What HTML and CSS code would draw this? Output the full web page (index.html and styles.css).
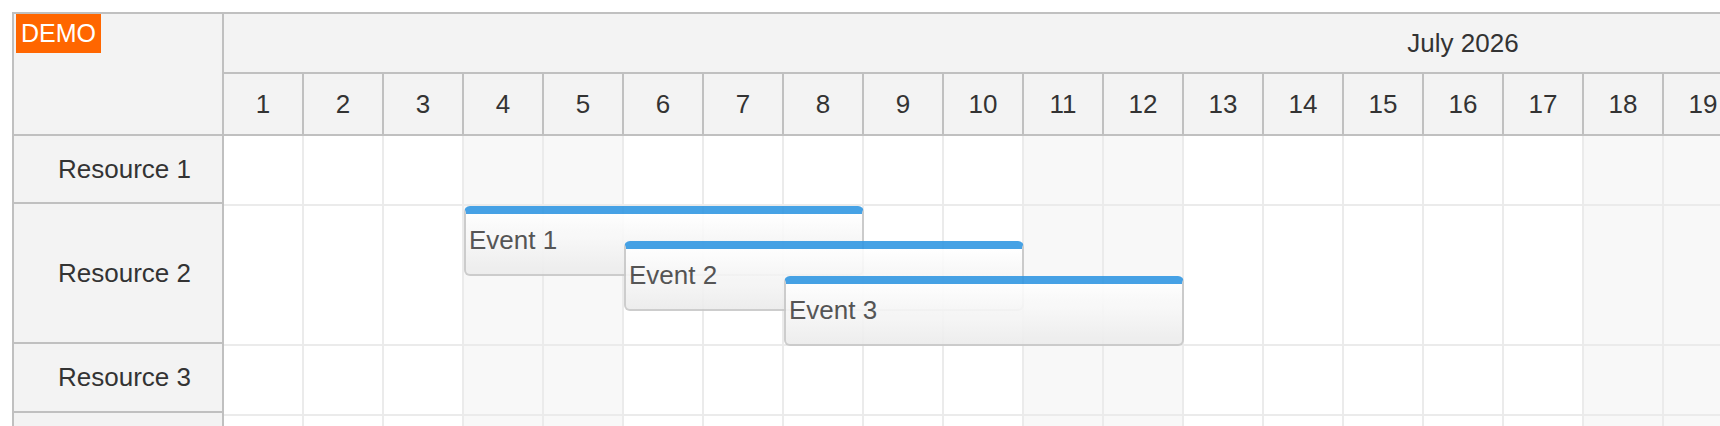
FILE: index.html
```html
<!DOCTYPE html>
<html lang="en">
<head>
  <meta charset="UTF-8">
  <meta name="viewport" content="width=device-width, initial-scale=1.0">
  <link rel="stylesheet" href="styles.css">
  <title>Scheduler</title>
</head>
<body class="page">
  <div class="scheduler">
    <div class="scheduler__corner">
      <span class="demo">DEMO</span>
    </div>

    <div class="timeline">
      <div class="timeline__month">July 2026</div>
      <div class="timeline__days">
        <div class="timeline__day">1</div>
        <div class="timeline__day">2</div>
        <div class="timeline__day">3</div>
        <div class="timeline__day">4</div>
        <div class="timeline__day">5</div>
        <div class="timeline__day">6</div>
        <div class="timeline__day">7</div>
        <div class="timeline__day">8</div>
        <div class="timeline__day">9</div>
        <div class="timeline__day">10</div>
        <div class="timeline__day">11</div>
        <div class="timeline__day">12</div>
        <div class="timeline__day">13</div>
        <div class="timeline__day">14</div>
        <div class="timeline__day">15</div>
        <div class="timeline__day">16</div>
        <div class="timeline__day">17</div>
        <div class="timeline__day">18</div>
        <div class="timeline__day">19</div>
        <div class="timeline__day">20</div>
        <div class="timeline__day">21</div>
        <div class="timeline__day">22</div>
        <div class="timeline__day">23</div>
        <div class="timeline__day">24</div>
        <div class="timeline__day">25</div>
        <div class="timeline__day">26</div>
        <div class="timeline__day">27</div>
        <div class="timeline__day">28</div>
        <div class="timeline__day">29</div>
        <div class="timeline__day">30</div>
        <div class="timeline__day">31</div>
      </div>
    </div>

    <div class="resources">
      <div class="resource resource_first">Resource 1</div>
      <div class="resource resource_tall">Resource 2</div>
      <div class="resource resource_third">Resource 3</div>
      <div class="resource">Resource 4</div>
    </div>

    <div class="lanes">
      <div class="lane">
        <div class="lane__cells"></div>
        <div class="lane__events"></div>
      </div>

      <div class="lane">
        <div class="lane__cells"></div>
        <div class="lane__events">
          <div class="event" style="grid-column: 4 / span 5; grid-row: 1 / span 2;">Event 1</div>
          <div class="event" style="grid-column: 6 / span 5; grid-row: 2 / span 2;">Event 2</div>
          <div class="event" style="grid-column: 8 / span 5; grid-row: 3 / span 2;">Event 3</div>
        </div>
      </div>

      <div class="lane">
        <div class="lane__cells"></div>
        <div class="lane__events"></div>
      </div>

      <div class="lane">
        <div class="lane__cells"></div>
        <div class="lane__events"></div>
      </div>
    </div>
  </div>
</body>
</html>
```

FILE: styles.css
```css
* {
  box-sizing: border-box;
}

html, .page {
  margin: 0;
  overflow: hidden;
  background: #fff;
  font-family: 'Liberation Sans', Arial, sans-serif;
  color: #333;
}

.page {
  padding: 12px 0 0 12px;
}

.scheduler {
  display: grid;
  grid-template-columns: 210px 2480px;
  width: max-content;
  border-top: 2px solid #c0c0c0;
  border-left: 2px solid #c0c0c0;
  font-size: 26px;
}

/* top left corner */
.scheduler__corner {
  display: flex;
  align-items: flex-start;
  background: #f3f3f3;
  border-right: 2px solid #c0c0c0;
  border-bottom: 2px solid #c0c0c0;
}

.demo {
  margin-left: 2px;
  padding: 5px 5px;
  background: #ff6600;
  color: #fff;
  font-size: 25px;
  line-height: 29px;
}

/* time header */
.timeline {
  background: #f3f3f3;
}

.timeline__month {
  display: flex;
  align-items: center;
  justify-content: center;
  height: 60px;
  border-right: 2px solid #c0c0c0;
  border-bottom: 2px solid #c0c0c0;
}

.timeline__days {
  display: flex;
  border-bottom: 2px solid #c0c0c0;
}

.timeline__day {
  display: flex;
  align-items: center;
  justify-content: center;
  flex: 0 0 80px;
  height: 60px;
  border-right: 2px solid #c0c0c0;
}

/* row headers */
.resources {
  background: #f3f3f3;
  border-right: 2px solid #c0c0c0;
}

.resource {
  display: flex;
  align-items: center;
  height: 70px;
  padding-left: 44px;
  border-bottom: 2px solid #c0c0c0;
}

.resource_first {
  height: 68px;
}

.resource_tall {
  height: 140px;
}

.resource_third {
  height: 69px;
}

/* grid body */
.lane {
  display: grid;
  min-height: 70px;
}

.lane__cells,
.lane__events {
  grid-area: 1 / 1;
}

.lane__cells {
  border-bottom: 2px solid #ebebeb;
  background-image:
    linear-gradient(to right, transparent 78px, #ebebeb 78px),
    linear-gradient(to right, transparent 240px, #f8f8f8 240px, #f8f8f8 400px, transparent 400px);
  background-size: 80px 100%, 560px 100%;
}

.lane__events {
  display: grid;
  grid-template-columns: repeat(31, 80px);
  grid-auto-rows: 35px;
}

.event {
  display: flex;
  align-items: center;
  padding: 0 3px 8px;
  border: 2px solid #c8c8c8;
  border-top: 8px solid #3398e3;
  border-radius: 6px;
  background: linear-gradient(#fff, #ececec);
  color: #444;
  white-space: nowrap;
  overflow: hidden;
  opacity: 0.9;
}
```
